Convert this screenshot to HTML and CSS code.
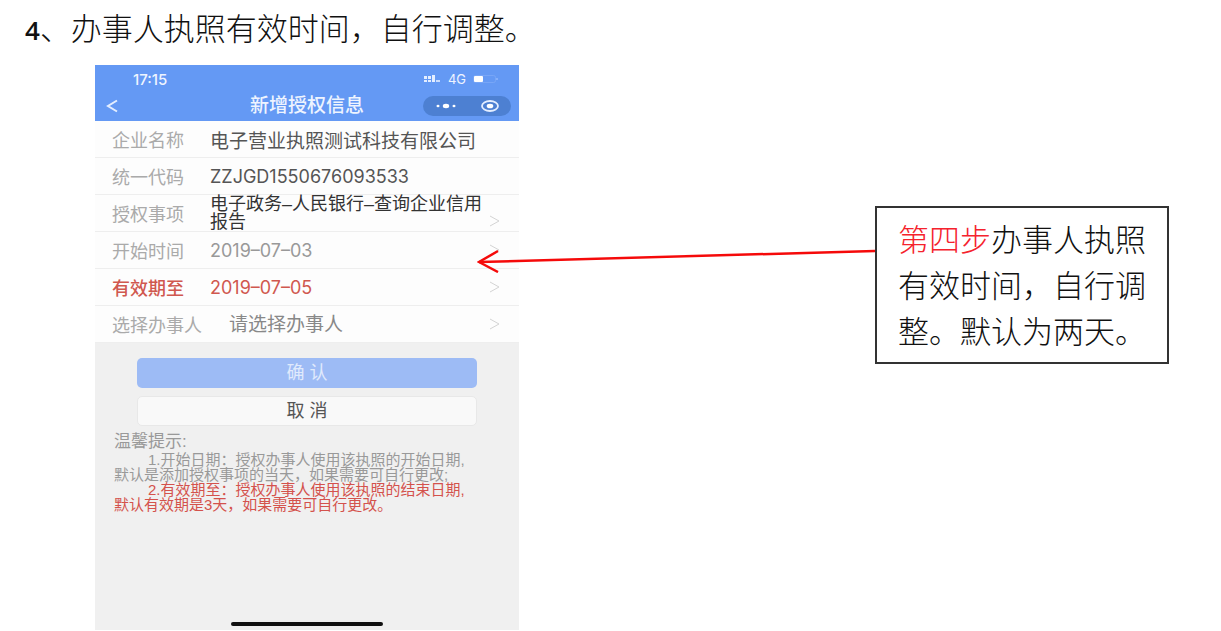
FILE: index.html
```html
<!DOCTYPE html>
<html lang="zh-CN">
<head>
  <meta charset="UTF-8" />
  <meta name="viewport" content="width=device-width, initial-scale=1.0" />
  <title>新增授权信息</title>
  <link rel="stylesheet" href="styles.css">
</head>
<body>

  <h1 class="step-title"><span class="step-number">4</span>、办事人执照有效时间，自行调整。</h1>

  <main class="guide">
    <section class="phone">
      <header class="phone-header">
        <div class="status-bar">
          <span class="clock">17:15</span>
          <div class="status-icons">
            <svg width="17" height="8" viewBox="0 0 17 8" fill="#e4eeff">
              <rect x="0" y="1" width="3" height="3" /><rect x="0" y="5" width="3" height="2" />
              <rect x="4" y="1" width="3" height="3" /><rect x="4" y="5" width="3" height="2" />
              <rect x="8" y="0" width="3" height="7" /><rect x="12" y="5" width="4" height="2" opacity=".8" />
            </svg>
            <span class="network">4G</span>
            <svg width="26" height="8" viewBox="0 0 26 8">
              <rect x=".5" y=".5" width="22" height="7" rx="2" fill="none" stroke="#78a6f7" />
              <rect x="1" y="1" width="9" height="6" rx="1" fill="#fff" />
              <path d="M24 3v2" stroke="#86b0fa" stroke-width="2" />
            </svg>
          </div>
        </div>
        <div class="nav-bar">
          <button class="back" type="button" aria-label="返回">
            <svg width="12" height="14" viewBox="0 0 12 14"><path d="M11 1.500 2 7l9 5.500" fill="none" stroke="#e4eeff" stroke-width="2" /></svg>
          </button>
          <h2>新增授权信息</h2>
          <div class="capsule">
            <button type="button" aria-label="更多">
              <svg width="20" height="6" viewBox="0 0 20 6" fill="#fff"><ellipse cx="2" cy="3" rx="1.500" ry="1.200" /><ellipse cx="10" cy="3" rx="3.200" ry="2.200" /><ellipse cx="18" cy="3" rx="1.500" ry="1.200" /></svg>
            </button>
            <button type="button" aria-label="关闭">
              <svg width="18" height="12" viewBox="0 0 18 12"><ellipse cx="9" cy="6" rx="8" ry="5" fill="none" stroke="#e4eeff" stroke-width="1.800" /><ellipse cx="9" cy="6" rx="3.300" ry="2.300" fill="#fff" /></svg>
            </button>
          </div>
        </div>
      </header>

      <form>
        <div class="row">
          <label for="company">企业名称</label>
          <input id="company" type="text" value="电子营业执照测试科技有限公司" readonly />
        </div>
        <div class="row">
          <label for="code">统一代码</label>
          <input class="num" id="code" type="text" value="ZZJGD1550676093533" readonly />
        </div>
        <div class="row row-matter">
          <label for="matter">授权事项</label>
          <button class="matter" id="matter" type="button">电子政务–人民银行–查询企业信用报告</button>
          <svg class="chevron" viewBox="0 0 12 12"><path d="m1 1 9 5-9 5" /></svg>
        </div>
        <div class="row row-muted">
          <label for="start">开始时间</label>
          <input class="num" id="start" type="text" value="2019–07–03" />
          <svg class="chevron" viewBox="0 0 12 12"><path d="m1 1 9 5-9 5" /></svg>
        </div>
        <div class="row row-red">
          <label for="end">有效期至</label>
          <input class="num" id="end" type="text" value="2019–07–05" />
          <svg class="chevron" viewBox="0 0 12 12"><path d="m1 1 9 5-9 5" /></svg>
        </div>
        <div class="row row-agent">
          <label for="agent">选择办事人</label>
          <select id="agent"><option>请选择办事人</option></select>
          <svg class="chevron" viewBox="0 0 12 12"><path d="m1 1 9 5-9 5" /></svg>
        </div>

        <div class="actions">
          <button class="confirm" type="submit">确 认</button>
          <button class="cancel" type="button">取 消</button>
        </div>
      </form>

      <div class="tips">
        <h3>温馨提示:</h3>
        <p>1.开始日期：授权办事人使用该执照的开始日期,<br>默认是添加授权事项的当天，如果需要可自行更改;</p>
        <p class="tip-red">2.有效期至：授权办事人使用该执照的结束日期,<br>默认有效期是3天，如果需要可自行更改。</p>
      </div>

      <div class="home-bar"></div>
    </section>

    <!-- arrow from the note to the date rows -->
    <div class="connector">
      <svg class="arrow" viewBox="0 0 398 28" preserveAspectRatio="none" fill="none" stroke="#f50a0a" stroke-width="2.500">
        <path d="M398 6 2 17" />
        <path d="M21 6 2 17l19 10" />
      </svg>
    </div>

    <aside class="note"><span class="note-step">第四步</span>办事人执照有效时间，自行调整。默认为两天。</aside>
  </main>

</body>
</html>
```
FILE: styles.css
```css
* {
  box-sizing: border-box;
}

body {
  margin: 0;
  background: #fff;
  color: #111;
  font-family: "Liberation Sans", "Noto Sans CJK SC", sans-serif;
}

h1, h2, h3, p {
  margin: 0;
}

button, input, select {
  margin: 0;
  padding: 0;
  border: none;
  background: none;
  color: inherit;
  font: inherit;
}

button {
  cursor: pointer;
}

svg {
  display: block;
}

.step-title {
  padding: 7px 25px 12px;
  font-size: 31px;
  font-weight: 300;
  line-height: 46px;
}

.step-number {
  font-family: "Open Sans", sans-serif;
  font-size: 26px;
  font-weight: 600;
}

.guide {
  display: flex;
  align-items: flex-start;
  padding: 0 52px 0 95px;
}

/* phone */
.phone {
  display: flex;
  flex-direction: column;
  flex: 0 1 424px;
  min-width: 0;
  min-height: 565px;
  background: #f0f0f0;
}

.phone-header {
  height: 56px;
  background: #6499f4;
  color: #eef4ff;
}

.status-bar {
  display: flex;
  justify-content: space-between;
  align-items: center;
  height: 28px;
  padding: 0 20px 0 38px;
}

.clock {
  font-family: Inter, sans-serif;
  font-size: 15px;
  font-weight: 500;
}

.status-icons {
  display: flex;
  align-items: center;
  gap: 7px;
}

.network {
  font-family: Inter, sans-serif;
  font-size: 13px;
}

.nav-bar {
  display: grid;
  grid-template-columns: 88px 1fr 88px;
  align-items: center;
  height: 26px;
  padding: 0 8px;
}

.back {
  width: 16px;
  padding-left: 3px;
}

.nav-bar h2 {
  font-size: 19px;
  font-weight: 500;
  line-height: 26px;
  text-align: center;
}

.capsule {
  display: flex;
  justify-content: space-around;
  align-items: center;
  height: 20px;
  border-radius: 10px;
  background: #4d80d2;
}

.row {
  display: flex;
  align-items: center;
  height: 37px;
  padding: 0 18px 0 17px;
  border-bottom: 1px solid #eee;
  background: #fdfdfd;
  color: #555;
  font-size: 18px;
}

.row label {
  flex: 0 0 98px;
  color: #aaa;
  white-space: nowrap;
}

.row input,
.row select,
.matter {
  flex: 1;
  min-width: 0;
}

.row input,
.row select {
  font-size: 19px;
}

.row .num {
  font-family: Inter, sans-serif;
  font-size: 18px;
}

.matter {
  color: #333;
  line-height: 18px;
  text-align: left;
}

.row-muted {
  color: #999;
}

.row-red,
.row-red label {
  color: #d0584f;
}

.row-red label {
  font-weight: 500;
}

.row-agent {
  color: #888;
}

.row-agent label {
  flex-basis: 117px;
}

.row select {
  appearance: none;
}

.chevron {
  flex: none;
  width: 12px;
  height: 12px;
  fill: none;
  stroke: #d4d4d4;
  stroke-width: 1;
}

.row-matter .chevron {
  align-self: flex-end;
  margin: 0 0 4px -6px;
}

.actions {
  display: flex;
  flex-direction: column;
  gap: 8px;
  padding: 15px 42px 0;
}

.actions button {
  height: 30px;
  border-radius: 5px;
  font-size: 18px;
  line-height: 28px;
}

.actions .confirm {
  background: #9dbbf5;
  color: #e0eafc;
}

.actions .cancel {
  border: 1px solid #e8e8e8;
  background: #f9f9f9;
  color: #555;
}

.tips {
  padding: 6px 16px 0 19px;
  color: #999;
  font-size: 15px;
  line-height: 15px;
}

.tips h3 {
  font-size: 17px;
  font-weight: 400;
  line-height: 20px;
}

.tips p {
  text-indent: 34px;
  white-space: nowrap;
}

.tips .tip-red {
  color: #d4524c;
}

.home-bar {
  width: 152px;
  height: 4px;
  margin: auto auto 4px;
  border-radius: 2px;
  background: #111;
}

/* note on the right */
.connector {
  position: relative;
  flex: 1;
  height: 28px;
  margin-top: 180px;
}

.arrow {
  position: absolute;
  top: 0;
  right: 0;
  width: calc(100% + 42px);
  height: 28px;
}

.note {
  flex: 0 0 294px;
  margin-top: 141px;
  padding: 10px 21px 6px;
  border: 2px solid #333;
  font-size: 31px;
  font-weight: 300;
  line-height: 46px;
}

.note-step {
  color: #f5222d;
}
```
